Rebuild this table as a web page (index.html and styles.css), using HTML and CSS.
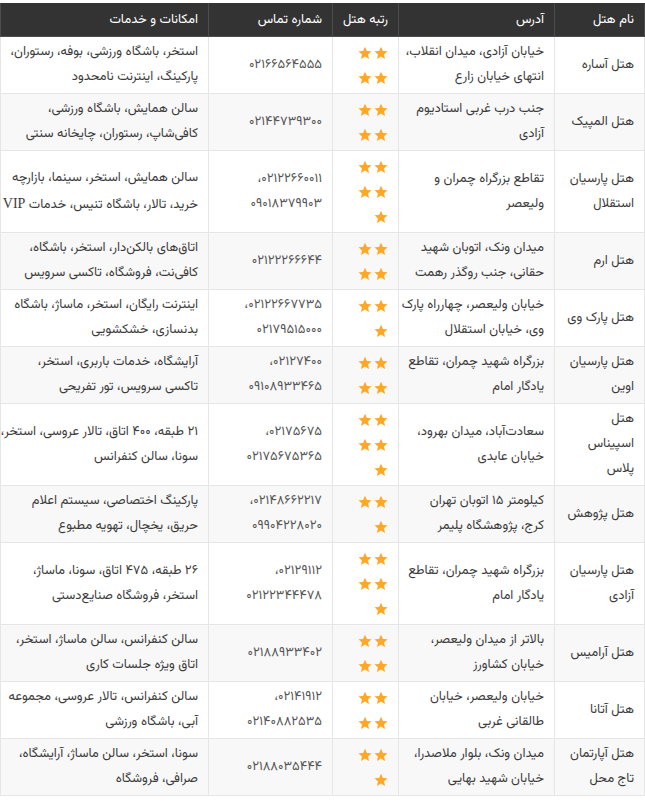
FILE: index.html
```html
<!DOCTYPE html>
<html lang="fa" dir="rtl">
<head>
<meta charset="utf-8">
<title>هتل‌های تهران</title>
<link rel="stylesheet" href="styles.css">
</head>
<body>
<svg width="0" height="0" class="defs" aria-hidden="true">
  <defs>
    <symbol id="star" viewBox="0 0 24 24">
      <path d="M12 1.2l3.3 7.2 7.8.8-5.9 5.2 1.7 7.8L12 18.2l-6.9 4 1.7-7.8-5.9-5.2 7.8-.8z"/>
    </symbol>
  </defs>
</svg>
<table class="hotels">
  <colgroup>
    <col class="w-name"><col class="w-addr"><col class="w-rate"><col class="w-phone"><col class="w-serv">
  </colgroup>
  <thead>
    <tr><th>نام هتل</th><th>آدرس</th><th>رتبه هتل</th><th>شماره تماس</th><th>امکانات و خدمات</th></tr>
  </thead>
  <tbody>
    <tr>
      <td>هتل آساره</td>
      <td>خیابان آزادی، میدان انقلاب،<br>انتهای خیابان زارع</td>
      <td><div class="sl"><svg class="st"><use href="#star"/></svg><svg class="st"><use href="#star"/></svg></div><div class="sl"><svg class="st"><use href="#star"/></svg><svg class="st"><use href="#star"/></svg></div></td>
      <td class="ph">۰۲۱۶۶۵۶۴۵۵۵</td>
      <td>استخر، باشگاه ورزشی، بوفه، رستوران،<br>پارکینگ، اینترنت نامحدود</td>
    </tr>
    <tr>
      <td>هتل المپیک</td>
      <td>جنب درب غربی استادیوم<br>آزادی</td>
      <td><div class="sl"><svg class="st"><use href="#star"/></svg><svg class="st"><use href="#star"/></svg></div><div class="sl"><svg class="st"><use href="#star"/></svg><svg class="st"><use href="#star"/></svg></div></td>
      <td class="ph">۰۲۱۴۴۷۳۹۳۰۰</td>
      <td>سالن همایش، باشگاه ورزشی،<br>کافی‌شاپ، رستوران، چایخانه سنتی</td>
    </tr>
    <tr>
      <td>هتل پارسیان<br>استقلال</td>
      <td>تقاطع بزرگراه چمران و<br>ولیعصر</td>
      <td><div class="sl"><svg class="st"><use href="#star"/></svg><svg class="st"><use href="#star"/></svg></div><div class="sl"><svg class="st"><use href="#star"/></svg><svg class="st"><use href="#star"/></svg></div><div class="sl"><svg class="st"><use href="#star"/></svg></div></td>
      <td class="ph">۰۲۱۲۲۶۶۰۰۱۱،<br>۰۹۰۱۸۳۷۹۹۰۳</td>
      <td>سالن همایش، استخر، سینما، بازارچه<br>خرید، تالار، باشگاه تنیس، خدمات <span class="lat">VIP</span></td>
    </tr>
    <tr>
      <td>هتل ارم</td>
      <td>میدان ونک، اتوبان شهید<br>حقانی، جنب روگذر رهمت</td>
      <td><div class="sl"><svg class="st"><use href="#star"/></svg><svg class="st"><use href="#star"/></svg></div><div class="sl"><svg class="st"><use href="#star"/></svg><svg class="st"><use href="#star"/></svg></div></td>
      <td class="ph">۰۲۱۲۲۲۶۶۶۴۴</td>
      <td>اتاق‌های بالکن‌دار، استخر، باشگاه،<br>کافی‌نت، فروشگاه، تاکسی سرویس</td>
    </tr>
    <tr>
      <td>هتل پارک وی</td>
      <td>خیابان ولیعصر، چهارراه پارک<br>وی، خیابان استقلال</td>
      <td><div class="sl"><svg class="st"><use href="#star"/></svg><svg class="st"><use href="#star"/></svg></div><div class="sl"><svg class="st"><use href="#star"/></svg></div></td>
      <td class="ph">۰۲۱۲۲۶۶۷۷۳۵،<br>۰۲۱۷۹۵۱۵۰۰۰</td>
      <td>اینترنت رایگان، استخر، ماساژ، باشگاه<br>بدنسازی، خشکشویی</td>
    </tr>
    <tr>
      <td>هتل پارسیان<br>اوین</td>
      <td>بزرگراه شهید چمران، تقاطع<br>یادگار امام</td>
      <td><div class="sl"><svg class="st"><use href="#star"/></svg><svg class="st"><use href="#star"/></svg></div><div class="sl"><svg class="st"><use href="#star"/></svg><svg class="st"><use href="#star"/></svg></div></td>
      <td class="ph">۰۲۱۲۷۴۰۰،<br>۰۹۱۰۸۹۳۳۴۶۵</td>
      <td>آرایشگاه، خدمات باربری، استخر،<br>تاکسی سرویس، تور تفریحی</td>
    </tr>
    <tr>
      <td>هتل<br>اسپیناس<br>پلاس</td>
      <td>سعادت‌آباد، میدان بهرود،<br>خیابان عابدی</td>
      <td><div class="sl"><svg class="st"><use href="#star"/></svg><svg class="st"><use href="#star"/></svg></div><div class="sl"><svg class="st"><use href="#star"/></svg><svg class="st"><use href="#star"/></svg></div><div class="sl"><svg class="st"><use href="#star"/></svg></div></td>
      <td class="ph">۰۲۱۷۵۶۷۵،<br>۰۲۱۷۵۶۷۵۳۶۵</td>
      <td>۲۱ طبقه، ۴۰۰ اتاق، تالار عروسی، استخر،<br>سونا، سالن کنفرانس</td>
    </tr>
    <tr>
      <td>هتل پژوهش</td>
      <td>کیلومتر ۱۵ اتوبان تهران<br>کرج، پژوهشگاه پلیمر</td>
      <td><div class="sl"><svg class="st"><use href="#star"/></svg><svg class="st"><use href="#star"/></svg></div><div class="sl"><svg class="st"><use href="#star"/></svg></div></td>
      <td class="ph">۰۲۱۴۸۶۶۲۲۱۷،<br>۰۹۹۰۴۲۲۸۰۲۰</td>
      <td>پارکینگ اختصاصی، سیستم اعلام<br>حریق، یخچال، تهویه مطبوع</td>
    </tr>
    <tr>
      <td>هتل پارسیان<br>آزادی</td>
      <td>بزرگراه شهید چمران، تقاطع<br>یادگار امام</td>
      <td><div class="sl"><svg class="st"><use href="#star"/></svg><svg class="st"><use href="#star"/></svg></div><div class="sl"><svg class="st"><use href="#star"/></svg><svg class="st"><use href="#star"/></svg></div><div class="sl"><svg class="st"><use href="#star"/></svg></div></td>
      <td class="ph">۰۲۱۲۹۱۱۲،<br>۰۲۱۲۲۳۴۴۴۷۸</td>
      <td>۲۶ طبقه، ۴۷۵ اتاق، سونا، ماساژ،<br>استخر، فروشگاه صنایع‌دستی</td>
    </tr>
    <tr>
      <td>هتل آرامیس</td>
      <td>بالاتر از میدان ولیعصر،<br>خیابان کشاورز</td>
      <td><div class="sl"><svg class="st"><use href="#star"/></svg><svg class="st"><use href="#star"/></svg></div><div class="sl"><svg class="st"><use href="#star"/></svg><svg class="st"><use href="#star"/></svg></div></td>
      <td class="ph">۰۲۱۸۸۹۳۳۴۰۲</td>
      <td>سالن کنفرانس، سالن ماساژ، استخر،<br>اتاق ویژه جلسات کاری</td>
    </tr>
    <tr>
      <td>هتل آتانا</td>
      <td>خیابان ولیعصر، خیابان<br>طالقانی غربی</td>
      <td><div class="sl"><svg class="st"><use href="#star"/></svg><svg class="st"><use href="#star"/></svg></div><div class="sl"><svg class="st"><use href="#star"/></svg><svg class="st"><use href="#star"/></svg></div></td>
      <td class="ph">۰۲۱۴۱۹۱۲،<br>۰۲۱۴۰۸۸۲۵۳۵</td>
      <td>سالن کنفرانس، تالار عروسی، مجموعه<br>آبی، باشگاه ورزشی</td>
    </tr>
    <tr>
      <td>هتل آپارتمان<br>تاج محل</td>
      <td>میدان ونک، بلوار ملاصدرا،<br>خیابان شهید بهایی</td>
      <td><div class="sl"><svg class="st"><use href="#star"/></svg><svg class="st"><use href="#star"/></svg></div><div class="sl"><svg class="st"><use href="#star"/></svg></div></td>
      <td class="ph">۰۲۱۸۸۰۳۵۴۴۴</td>
      <td>سونا، استخر، سالن ماساژ، آرایشگاه،<br>صرافی، فروشگاه</td>
    </tr>
  </tbody>
</table>
</body>
</html>
```

FILE: styles.css
```css
html, body {
  margin: 0;
  padding: 0;
  background: #ffffff;
}
body {
  padding-top: 3px;
  font-family: "Vazirmatn", "DejaVu Sans", sans-serif;
}
.defs {
  position: absolute;
  width: 0;
  height: 0;
  overflow: hidden;
}
.hotels {
  width: 644px;
  border-collapse: collapse;
  table-layout: fixed;
  font-size: 13px;
  color: #3c3c3c;
}
.w-name { width: 90px; }
.w-addr { width: 156px; }
.w-rate { width: 66px; }
.w-phone { width: 124px; }
.w-serv { width: 208px; }
.hotels th {
  background: #333333;
  color: #ffffff;
  font-weight: normal;
  text-align: right;
  padding: 3px 10px;
  line-height: 26px;
  border: 1px solid #4c4c4c;
  border-top-color: #333333;
  white-space: nowrap;
}
.hotels td {
  padding: 3px 10px;
  line-height: 25px;
  border: 1px solid #e6e6e6;
  vertical-align: middle;
  text-align: right;
  white-space: nowrap;
}
.hotels tbody tr:nth-child(even) td {
  background: #f8f8f8;
}
.ph {
  color: #555555;
}
.lat {
  font-family: "Liberation Serif", serif;
  font-size: 14px;
}
.sl {
  height: 25px;
  display: flex;
  align-items: center;
  justify-content: flex-start;
  gap: 2px;
}
.st {
  width: 14px;
  height: 14px;
  fill: #ffa726;
}
```
